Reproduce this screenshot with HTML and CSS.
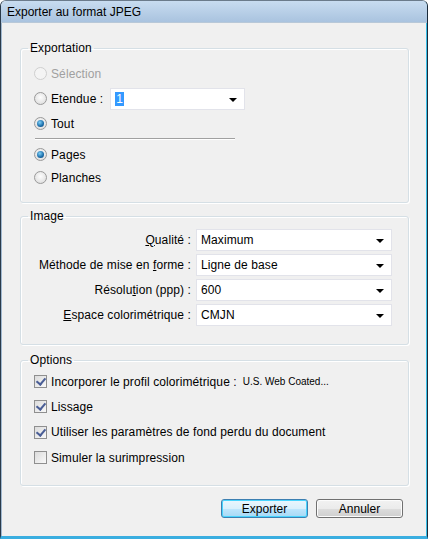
FILE: index.html
```html
<!DOCTYPE html>
<html lang="fr">
<head>
<meta charset="utf-8">
<title>Exporter au format JPEG</title>
<link rel="stylesheet" href="styles.css">
</head>
<body>
<div class="window">
  <div class="titlebar">Exporter au format JPEG</div>
  <div class="content">
    <fieldset class="group g-export">
      <legend>Exportation</legend>
      <div class="row disabled"><span class="radio"></span><span>Sélection</span></div>
      <div class="row r-etendue"><span class="radio"></span><span>Etendue :</span>
        <div class="select s-range"><span class="sel-text"><span class="hl">1</span></span><span class="arrow"></span></div>
      </div>
      <div class="row"><span class="radio on"></span><span>Tout</span></div>
      <div class="sep"></div>
      <div class="row short"><span class="radio on"></span><span>Pages</span></div>
      <div class="row short"><span class="radio"></span><span>Planches</span></div>
    </fieldset>

    <fieldset class="group g-image">
      <legend>Image</legend>
      <div class="form">
        <label><u>Q</u>ualité :</label>
        <div class="select"><span class="sel-text">Maximum</span><span class="arrow"></span></div>
        <label>Méthode de mise en <u>f</u>orme :</label>
        <div class="select"><span class="sel-text">Ligne de base</span><span class="arrow"></span></div>
        <label>Résolu<u>t</u>ion (ppp) :</label>
        <div class="select"><span class="sel-text">600</span><span class="arrow"></span></div>
        <label><u>E</u>space colorimétrique :</label>
        <div class="select"><span class="sel-text">CMJN</span><span class="arrow"></span></div>
      </div>
    </fieldset>

    <fieldset class="group g-options">
      <legend>Options</legend>
      <div class="row"><span class="check on"></span><span>Incorporer le profil colorimétrique :</span><span class="small">U.S. Web Coated...</span></div>
      <div class="row"><span class="check on"></span><span>Lissage</span></div>
      <div class="row"><span class="check on"></span><span>Utiliser les paramètres de fond perdu du document</span></div>
      <div class="row"><span class="check"></span><span>Simuler la surimpression</span></div>
    </fieldset>

    <div class="buttons">
      <button class="btn default">Exporter</button>
      <button class="btn">Annuler</button>
    </div>
  </div>
</div>
</body>
</html>
```

FILE: styles.css
```css
* { box-sizing: border-box; }
html, body { margin: 0; padding: 0; }
body {
  width: 428px;
  height: 539px;
  overflow: hidden;
  font-family: "Liberation Sans", Arial, sans-serif;
  font-size: 12px;
  color: #000;
  background: #fff;
}
.window {
  width: 428px;
  height: 539px;
  display: flex;
  flex-direction: column;
  border: 1px solid #2a3a4a;
  border-top-color: #6b7b8b;
  border-right-color: #1a2a3a;
  border-bottom: 3px solid #3aaee0;
  box-shadow: inset -1px 0 0 #39c0e8;
  background: #f0f0f0;
  border-radius: 6px 6px 0 0;
}
.titlebar {
  height: 22px;
  flex: none;
  padding: 4px 0 0 6px;
  font-size: 12px;
  background: linear-gradient(#c8dcf0, #a9c3df);
  border-radius: 5px 5px 0 0;
  border-bottom: 1px solid #b8c8d8;
  color: #000;
}
.content {
  flex: 1;
  padding: 18px 18px 0 18px;
  border-left: 1px solid #a0b8d0;
  display: flex;
  flex-direction: column;
  letter-spacing: 0.1px;
}
.group {
  margin: 0;
  border: 1px solid #d5dfe5;
  box-shadow: inset 1px 1px 0 #fff, 1px 1px 0 #fff;
  border-radius: 3px;
  padding: 0 0 0 13px;
  min-width: 0;
  flex: none;
}
.group legend {
  padding: 0 2px;
  margin-left: -6px;
  font-size: 12px;
  line-height: 14px;
}
.row {
  display: flex;
  align-items: center;
  height: 25px;
  gap: 4px;
  font-size: 12px;
}
.row.short { height: 23px; }
.g-export { height: 162px; padding-top: 6px; }
.row.disabled { color: #a0a0a0; }
.radio {
  width: 13px;
  height: 13px;
  border-radius: 50%;
  border: 1px solid #9a9a9a;
  background: radial-gradient(circle at 50% 40%, #fdfdfd, #d8d8d8);
  flex: none;
  position: relative;
}
.row.disabled .radio { border-color: #cfcfcf; background: #f4f4f4; }
.radio.on::after {
  content: "";
  position: absolute;
  left: 2px; top: 2px;
  width: 7px; height: 7px;
  border-radius: 50%;
  background: radial-gradient(circle at 40% 35%, #7fd0f8, #1a6ca8 60%, #0c3f70);
}
.select {
  position: relative;
  width: 135px;
  height: 22px;
  border: 1px solid #e2e3ea;
  background: #fff;
  display: flex;
  align-items: center;
  padding-left: 4px;
}
.s-range { margin-left: 3px; }
.hl { background: #3399ff; color: #fff; padding: 0 1px; }
.arrow {
  position: absolute;
  right: 7px;
  top: 9px;
  width: 0; height: 0;
  border-left: 4px solid transparent;
  border-right: 4px solid transparent;
  border-top: 4px solid #000;
}
.sep {
  width: 200px;
  height: 2px;
  border-top: 1px solid #a0a0a0;
  border-bottom: 1px solid #fff;
  margin: 2px 0 3px 1px;
}
.g-image { margin-top: 6px; height: 136px; padding: 6px 16px 0 13px; }
.form {
  display: grid;
  grid-template-columns: 1fr 196px;
  row-gap: 3px;
  column-gap: 5px;
  align-items: center;
  font-size: 12px;
}
.form label { text-align: right; white-space: nowrap; }
.form .select { width: 196px; }
.form u { text-decoration: underline; text-underline-offset: 1px; }
.g-options { margin-top: 8px; height: 133px; padding-top: 2px; }
.g-options .row { height: 25.3px; gap: 3px; }
.check {
  width: 13px; height: 13px;
  border: 1px solid #8f8f8f;
  background: linear-gradient(135deg, #dcdcdc, #f8f8f8);
  flex: none;
  position: relative;
  margin-right: 1px;
}
.check.on::after {
  content: "";
  position: absolute;
  left: 3px; top: 0px;
  width: 4px; height: 7px;
  border-right: 2px solid #4a5e96;
  border-bottom: 2px solid #4a5e96;
  transform: rotate(40deg);
}
.small { font-size: 10px; margin-left: 3px; letter-spacing: 0; }
.buttons {
  display: flex;
  justify-content: flex-end;
  gap: 8px;
  padding: 13px 6px 0 0;
}
.btn {
  width: 87px;
  height: 19px;
  font-family: inherit;
  font-size: 12px;
  border: 1px solid #707070;
  border-radius: 3px;
  background: linear-gradient(#f2f2f2 0%, #ebebeb 50%, #dddddd 51%, #cfcfcf 100%);
  box-shadow: inset 0 0 0 1px #fcfcfc;
  padding: 0;
  color: #000;
}
.btn.default {
  border-color: #3c7fb1;
  background: linear-gradient(#eaf6fd 0%, #d9f0fc 50%, #bee6fd 51%, #a7d9f5 100%);
  box-shadow: inset 0 0 0 1px #48d4fd;
}
```
